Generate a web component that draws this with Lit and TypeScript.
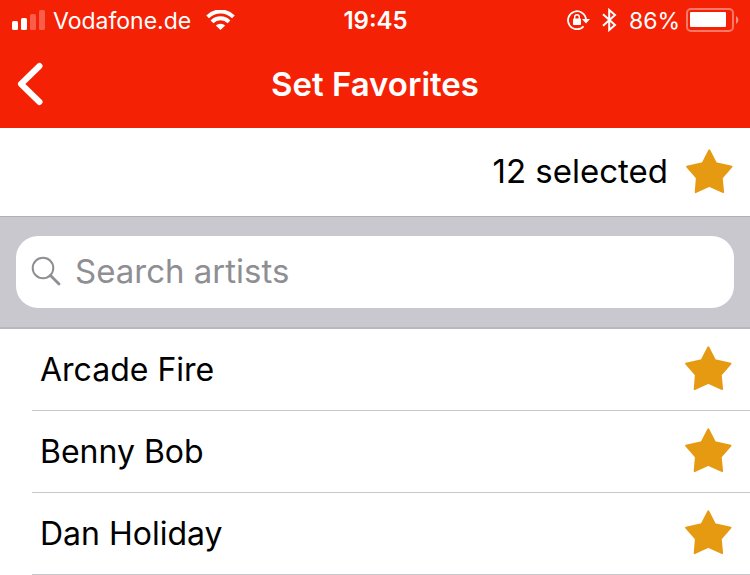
import { LitElement, html, css, svg } from "lit";
import { customElement, property, state } from "lit/decorators.js";

const star = html`<svg class="star" viewBox="0 0 48 46" width="48" height="46" aria-hidden="true">
  ${svg`<path d="M24.3 2.2 L31 15.2 L46.6 18.6 L36.8 29.8 L38.2 44.2 L24.3 38 L10.6 44.2 L11.8 29.8 L2 18.6 L17.6 15.2 Z"
    fill="currentColor" stroke="currentColor" stroke-width="1.8" stroke-linejoin="round"/>`}
</svg>`;

@customElement("status-bar")
export class StatusBar extends LitElement {
  static styles = css`
    :host {
      display: grid;
      grid-template-columns: 1fr auto 1fr;
      align-items: center;
      align-content: center;
      height: 40px;
      padding: 0 11px 0 12px;
      color: #fff;
      font-size: 23px;
      line-height: 38px;
    }
    span { padding-top: 2px; }
    .side { display: flex; align-items: center; white-space: nowrap; }
    .carrier { margin: 0 15px 0 8px; }
    .clock { font-size: 24px; font-weight: 600; }
    .right { justify-content: flex-end; }
    .bluetooth { margin: 0 12px; }
    .battery { margin-left: 6px; }
    svg { display: block; flex: none; }
  `;

  render() {
    return html`
      <div class="side">
        <svg width="33" height="20" viewBox="0 0 33 20" fill="#fff" role="img" aria-label="Signal">
          <rect x="0" y="11" width="6" height="9" rx="1.5"/>
          <rect x="9" y="8" width="6" height="12" rx="1.5"/>
          <rect x="18" y="4" width="6" height="16" rx="1.5" opacity=".28"/>
          <rect x="27" y="0" width="6" height="20" rx="1.5" opacity=".28"/>
        </svg>
        <span class="carrier">Vodafone.de</span>
        <svg width="29" height="20" viewBox="0 0 29 20" role="img" aria-label="Wi-Fi">
          <g fill="none" stroke="#fff" stroke-width="3.9">
            <path d="M1.6 6.8 A18.2 18.2 0 0 1 27.4 6.8"/>
            <path d="M6 11.8 A12 12 0 0 1 23 11.8"/>
          </g>
          <path d="M9.8 15.6 A6.6 6.6 0 0 1 19.2 15.6 L14.5 20 Z" fill="#fff"/>
        </svg>
      </div>
      <span class="clock">19:45</span>
      <div class="side right">
        <svg width="23" height="20" viewBox="0 0 23 20" role="img" aria-label="Rotation lock">
          <path d="M16.6 16.4 A9 9 0 1 1 19 9.5" fill="none" stroke="#fff" stroke-width="1.8"/>
          <path d="M15 9 H23 L19 13.4 Z" fill="#fff"/>
          <rect x="6" y="8.5" width="8" height="6.5" rx=".8" fill="#fff"/>
          <path d="M7.7 9 V7 a2.3 2.3 0 0 1 4.6 0 V9" fill="none" stroke="#fff" stroke-width="1.4"/>
        </svg>
        <svg class="bluetooth" width="15" height="24" viewBox="0 0 15 24" role="img" aria-label="Bluetooth">
          <path d="M1 6.2 L13 17 L7.2 22 V2 L13 7 L1 17.8" fill="none" stroke="#fff" stroke-width="2"/>
        </svg>
        <span>86%</span>
        <svg class="battery" width="53" height="24" viewBox="0 0 53 24" role="img" aria-label="Battery">
          <rect x="1" y="1" width="46" height="22" rx="4" fill="none" stroke="#fff" stroke-opacity=".4" stroke-width="2"/>
          <rect x="4" y="4" width="36" height="15" rx="1" fill="#fff"/>
          <path d="M50 8 a4.5 4.5 0 0 1 0 8 Z" fill="#fff" opacity=".5"/>
        </svg>
      </div>
    `;
  }
}

@customElement("artist-row")
export class ArtistRow extends LitElement {
  @property() name = "";
  @property({ type: Boolean }) favorite = false;

  static styles = css`
    :host { display: block; padding-left: 32px; font-size: 32px; }
    .row {
      display: flex;
      align-items: center;
      justify-content: space-between;
      box-sizing: border-box;
      height: 82px;
      padding: 0 18px 0 8px;
      border-bottom: 1px solid #c8c7cc;
      cursor: pointer;
    }
    .toggle { display: grid; padding-bottom: 3px; color: #c8c7cc; }
    .toggle > * { grid-area: 1 / 1; }
    .tick { width: 100%; height: 100%; margin: 0; opacity: 0; cursor: pointer; }
    .tick:checked + .star { color: #e69a12; }
    .star { display: block; pointer-events: none; }
  `;

  private toggle() {
    this.dispatchEvent(new CustomEvent("toggle-favorite", { bubbles: true, composed: true, detail: this.name }));
  }

  render() {
    return html`<label class="row">
      <span>${this.name}</span>
      <span class="toggle">
        <input class="tick" type="checkbox" .checked=${this.favorite} @change=${this.toggle} />${star}
      </span>
    </label>`;
  }
}

@customElement("app-root")
export class AppRoot extends LitElement {
  @state() private artists = [
    { name: "Arcade Fire", favorite: true },
    { name: "Benny Bob", favorite: true },
    { name: "Dan Holiday", favorite: true },
  ];
  @state() private query = "";
  private otherSelected = 9;

  static styles = css`
    :host {
      display: block;
      min-height: 100vh;
      background: #fff;
      color: #000;
      font-family: Inter, "Liberation Sans", sans-serif;
      font-size: 33px;
      line-height: 40px;
    }
    .top { background: #f52105; color: #fff; }
    .nav {
      display: grid;
      grid-template-columns: 1fr auto 1fr;
      align-items: center;
      height: 88px;
      padding: 0 16px;
    }
    .back {
      justify-self: start;
      display: block;
      padding: 0;
      border: 0;
      background: none;
      color: inherit;
      cursor: pointer;
    }
    .back svg, .star, .lens { display: block; flex: none; }
    .title { margin: 0; font-size: 33px; font-weight: 600; }
    .summary {
      display: flex;
      align-items: center;
      justify-content: flex-end;
      gap: 17px;
      box-sizing: border-box;
      height: 89px;
      padding: 0 17px 2px;
      border-bottom: 1px solid #b2b1b6;
    }
    .summary .star { color: #e69a12; }
    .search {
      padding: 19px 16px;
      background: #c9c8ce;
      border-bottom: 2px solid #b9b8be;
    }
    .field {
      display: flex;
      align-items: center;
      gap: 14px;
      height: 72px;
      padding: 0 15px 3px;
      box-sizing: border-box;
      border-radius: 22px;
      background: #fff;
      color: #8e8e93;
    }
    .input {
      flex: 1;
      min-width: 0;
      height: 40px;
      padding: 0;
      border: 0;
      outline: 0;
      background: none;
      color: #000;
      font: inherit;
    }
    .input::placeholder { color: #8e8e93; opacity: 1; }
    .list { margin: 0; padding: 0; list-style: none; }
  `;

  private onToggle(e: CustomEvent<string>) {
    this.artists = this.artists.map((a) => (a.name === e.detail ? { ...a, favorite: !a.favorite } : a));
  }

  render() {
    const count = this.otherSelected + this.artists.filter((a) => a.favorite).length;
    const shown = this.artists.filter((a) => a.name.toLowerCase().includes(this.query.toLowerCase()));
    return html`
      <header class="top">
        <status-bar></status-bar>
        <div class="nav">
          <button class="back" aria-label="Back">
            <svg width="28" height="44" viewBox="0 0 28 44">
              <path d="M23.5 4 L5 22 L23.5 40" fill="none" stroke="#fff" stroke-width="6" stroke-linecap="round" stroke-linejoin="round"/>
            </svg>
          </button>
          <h1 class="title">Set Favorites</h1>
        </div>
      </header>
      <main>
        <div class="summary"><span>${count} selected</span>${star}</div>
        <div class="search">
          <label class="field">
            <svg class="lens" width="30" height="30" viewBox="0 0 30 30" aria-hidden="true">
              <circle cx="12" cy="12" r="10.3" fill="none" stroke="currentColor" stroke-width="2"/>
              <path d="M19.5 19.5 L28 28" stroke="currentColor" stroke-width="2.8" stroke-linecap="round"/>
            </svg>
            <input class="input" type="text" aria-label="Search artists" placeholder="Search artists"
              @input=${(e: Event) => (this.query = (e.target as HTMLInputElement).value)} />
          </label>
        </div>
        <ul class="list" @toggle-favorite=${this.onToggle}>
          ${shown.map((a) => html`<li><artist-row .name=${a.name} .favorite=${a.favorite}></artist-row></li>`)}
        </ul>
      </main>
    `;
  }
}
